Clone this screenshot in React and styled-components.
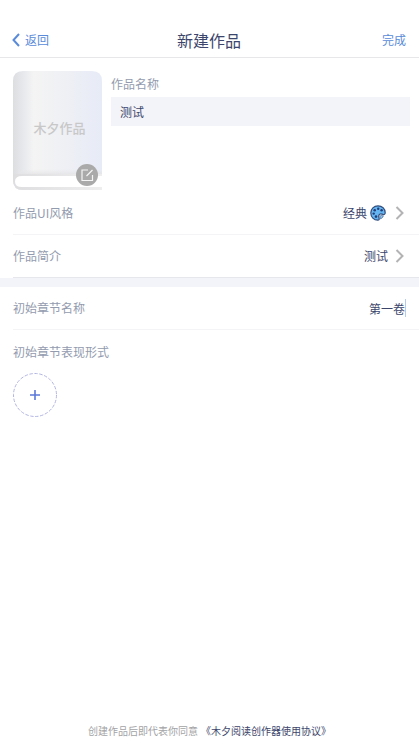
import React, { useState } from 'react';
import styled, { createGlobalStyle } from 'styled-components';

const GlobalStyle = createGlobalStyle`
  * {
    box-sizing: border-box;
  }
  body {
    margin: 0;
    background: #fff;
    font-family: "Noto Sans CJK SC", "Noto Sans", sans-serif;
    font-size: 12px;
    color: #3c466c;
  }
  button, input {
    font: inherit;
    color: inherit;
    border: 0;
    padding: 0;
    margin: 0;
    background: none;
    border-radius: 0;
    outline: none;
  }
  button {
    cursor: pointer;
  }
`;

const Page = styled.div`
  min-height: 100vh;
  display: flex;
  flex-direction: column;
`;

const Header = styled.header`
  display: grid;
  grid-template-columns: 1fr auto 1fr;
  align-items: center;
  height: 58px;
  padding: 22px 13px 0 12px;
  border-bottom: 1px solid #e7e7e9;
`;

const Title = styled.h1`
  margin: 0;
  font-size: 16px;
  line-height: 24px;
  font-weight: 400;
`;

const HeaderButton = styled.button`
  display: flex;
  align-items: center;
  gap: 5px;
  line-height: 24px;
  color: #5a8bd9;
  justify-self: ${props => (props.$end ? 'end' : 'start')};
`;

const Work = styled.section`
  display: flex;
  gap: 9px;
  padding: 13px 9px 1px 13px;
`;

const Cover = styled.button`
  position: relative;
  flex: none;
  width: 89px;
  height: 120px;

  svg {
    display: block;
  }
`;

const CoverName = styled.span`
  position: absolute;
  top: 47px;
  left: 0;
  width: 100%;
  padding-left: 4px;
  font-size: 13px;
  line-height: 20px;
  font-weight: 500;
  text-align: center;
  color: #c8c8c9;
`;

const EditBadge = styled.span`
  position: absolute;
  right: 4px;
  bottom: 5px;
`;

const Field = styled.div`
  flex: 1;
  min-width: 0;
  display: flex;
  flex-direction: column;
  padding-top: 3px;
`;

const Label = styled.label`
  line-height: 20px;
  color: #939bae;
`;

const NameInput = styled.input`
  width: 100%;
  height: 29px;
  margin-top: 3px;
  padding: 0 9px;
  background: #f3f4f9;
`;

const Row = styled.div`
  display: flex;
  align-items: center;
  justify-content: space-between;
  height: 43px;
  margin-left: 13px;
  padding-right: ${props => (props.$link ? '15px' : '13px')};
  border-bottom: 1px solid ${props => (props.$last ? '#e6e7ec' : '#f4f4f6')};
`;

const RowValue = styled.button`
  display: flex;
  align-items: center;
  gap: 3px;
  line-height: 20px;

  svg:last-child {
    margin-left: ${props => (props.$icon ? '6px' : '4px')};
  }
`;

const ChapterInput = styled.input`
  width: 160px;
  height: 18px;
  text-align: right;
  border-right: 1px solid #b5cbed;
`;

const Divider = styled.div`
  height: 9px;
  background: #f3f4f9;
`;

const Form = styled.section`
  padding: 12px 13px;
`;

const FormTitle = styled.h2`
  margin: 0;
  font-size: 12px;
  line-height: 20px;
  font-weight: 400;
  color: #939bae;
`;

const AddButton = styled.button`
  display: block;
  width: 44px;
  height: 44px;
  margin-top: 11px;

  svg {
    display: block;
  }
`;

const Footer = styled.footer`
  margin-top: auto;
  padding: 0 0 4px;
  font-size: 10px;
  line-height: 20px;
  text-align: center;
  color: #a3a3a5;

  a {
    margin-left: 3px;
    color: #3c466c;
    text-decoration: none;
  }
`;

const BackIcon = () => (
  <svg width="8" height="14" viewBox="0 0 8 14" fill="none" stroke="#5a8bd9" strokeWidth="2">
    <path d="M7 1 1.5 7 7 13" />
  </svg>
);

const ArrowIcon = () => (
  <svg width="9" height="14" viewBox="0 0 9 14" fill="none" stroke="#b3b3b6" strokeWidth="2">
    <path d="M1.5 1 7.5 7l-6 6" />
  </svg>
);

const PaletteIcon = () => (
  <svg width="16" height="16" viewBox="0 0 16 16">
    <path
      d="M8 .8C3.9.8.8 3.9.8 8s3.1 7.2 7 7.2c1.300 0 1.700-.8 1.300-1.900-.7-1.900-.5-3.500 1-4.300 1.200-.6 2.100.4 3.200.5 1.200.1 1.900-.6 1.900-1.800C15.200 3.700 12 .8 8 .8Z"
      fill="#64b5f1"
      stroke="#34507f"
      strokeWidth="1.2"
    />
    <path d="M10.500 10.700c.9-.9 1.700.3 3 0-.5 1.500-1.500 2.600-2.900 3.200-.4-1-.7-2.300-.1-3.200Z" fill="#8ccaf5" stroke="#34507f" strokeWidth=".6" />
    <g fill="#263c75">
      <circle cx="8.2" cy="3.700" r="1.2" />
      <circle cx="4.700" cy="5.2" r="1.3" />
      <circle cx="3.700" cy="8.600" r="1.2" />
      <circle cx="6" cy="11.600" r="1.3" />
      <circle cx="11.600" cy="5.300" r="1.2" />
    </g>
  </svg>
);

const BookIcon = () => (
  <svg width="89" height="120" viewBox="0 0 89 120">
    <defs>
      <linearGradient id="cover">
        <stop offset="0" stopColor="#dddee0" />
        <stop offset=".1" stopColor="#e5e7eb" />
        <stop offset=".23" stopColor="#f4f4f4" />
        <stop offset=".5" stopColor="#f0f1f4" />
        <stop offset="1" stopColor="#e7ebf7" />
      </linearGradient>
      <linearGradient id="spine">
        <stop offset="0" stopColor="#dedee0" />
        <stop offset="1" stopColor="#eeeeef" />
      </linearGradient>
      <linearGradient id="shade" x2="0" y2="1">
        <stop offset="0" stopColor="#e8e8ea" stopOpacity="0" />
        <stop offset="1" stopColor="#e4e4e6" />
      </linearGradient>
    </defs>
    <path d="M10 0h69q10 0 10 10v93H10v16Q0 119 0 109V10Q0 0 10 0Z" fill="url(#cover)" />
    <path d="M5 98h84v6H5Z" fill="url(#shade)" />
    <path d="M0 103h89v16H10Q0 119 0 109Z" fill="url(#spine)" />
    <path d="M9 105h80v11H9Q2 116 2 110.5Q2 105 9 105Z" fill="#fff" />
  </svg>
);

const EditIcon = () => (
  <svg width="22" height="22" viewBox="0 0 22 22" fill="none" stroke="#f4f4f4" strokeWidth="1.2">
    <circle cx="11" cy="11" r="11" fill="#aaa" stroke="none" />
    <path d="M12 6H6v10.5h10.5V11M10.5 12 16.5 6" />
  </svg>
);

const AddIcon = () => (
  <svg width="44" height="44" viewBox="0 0 44 44" fill="none">
    <circle cx="22" cy="22" r="21.5" stroke="#b3b6e2" strokeDasharray="3.4 1.6" />
    <path d="M22 17v10M17 22h10" stroke="#5b78d9" strokeWidth="1.6" />
  </svg>
);

const App = () => {
  const [name, setName] = useState('测试');
  const [chapter, setChapter] = useState('第一卷');

  return (
    <Page>
      <GlobalStyle />
      <Header>
        <HeaderButton type="button"><BackIcon />返回</HeaderButton>
        <Title>新建作品</Title>
        <HeaderButton type="button" $end>完成</HeaderButton>
      </Header>
      <Work>
        <Cover type="button">
          <BookIcon />
          <CoverName>木夕作品</CoverName>
          <EditBadge><EditIcon /></EditBadge>
        </Cover>
        <Field>
          <Label htmlFor="name">作品名称</Label>
          <NameInput id="name" value={name} onChange={e => setName(e.target.value)} />
        </Field>
      </Work>
      <Row $link>
        <Label htmlFor="style">作品UI风格</Label>
        <RowValue id="style" type="button" $icon>经典<PaletteIcon /><ArrowIcon /></RowValue>
      </Row>
      <Row $link $last>
        <Label htmlFor="intro">作品简介</Label>
        <RowValue id="intro" type="button">测试<ArrowIcon /></RowValue>
      </Row>
      <Divider />
      <Row>
        <Label htmlFor="chapter">初始章节名称</Label>
        <ChapterInput id="chapter" value={chapter} onChange={e => setChapter(e.target.value)} />
      </Row>
      <Form>
        <FormTitle>初始章节表现形式</FormTitle>
        <AddButton type="button" aria-label="添加"><AddIcon /></AddButton>
      </Form>
      <Footer>
        创建作品后即代表你同意<a href="#agreement">《木夕阅读创作器使用协议》</a>
      </Footer>
    </Page>
  );
};

export default App;
